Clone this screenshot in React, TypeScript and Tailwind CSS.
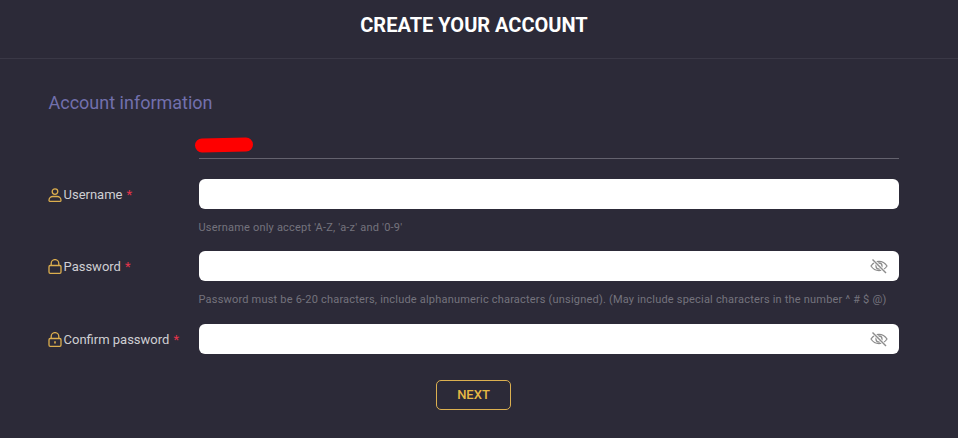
import type { ReactNode } from 'react';

function UserIcon() {
  return (
    <svg viewBox="0 0 14 14" className="h-[14px] w-[14px]" fill="none" stroke="currentColor" strokeWidth="1.3">
      <circle cx="7" cy="3.6" r="2.8" />
      <path d="M1 12.200c0-2.400 2-3.700 3.600-3.700h4.800c1.600 0 3.600 1.300 3.600 3.700 0 .8-.4 1.200-1.200 1.200H2.200c-.8 0-1.200-.4-1.200-1.200z" />
    </svg>
  );
}

function LockIcon({ keyhole }: { keyhole?: boolean }) {
  return (
    <svg viewBox="0 0 14 15" className="h-[15px] w-[14px]" fill="none" stroke="currentColor" strokeWidth="1.3">
      <path d="M3.200 6.500V4.400a3.800 3.800 0 0 1 7.600 0v2.100" />
      <rect x="1" y="6.500" width="12" height="7.800" rx="1.200" />
      {keyhole && <path d="M7 9.200v2.400" strokeWidth="1.600" />}
    </svg>
  );
}

function EyeIcon() {
  return (
    <svg
      viewBox="0 0 18 16"
      className="absolute right-[11px] top-[7px] h-[16px] w-[18px] text-[#8c8c8c]"
      fill="none"
      stroke="currentColor"
      strokeWidth="1.3"
    >
      <path d="M1 8c2-3 4.800-4.600 8-4.600S15 5 17 8c-2 3-4.800 4.600-8 4.600S3 11 1 8z" />
      <circle cx="9" cy="8" r="3" />
      <path d="M3.500 2.200l11.500 12" stroke="#fff" strokeWidth="3" />
      <path d="M2.500 1.500l13.500 13.500" strokeWidth="1.400" />
    </svg>
  );
}

function Field({
  icon,
  label,
  hint,
  hasEye,
  rowClass,
}: {
  icon: ReactNode;
  label: string;
  hint?: string;
  hasEye?: boolean;
  rowClass?: string;
}) {
  return (
    <div className={rowClass}>
      <div className="flex items-center">
        <div className="flex w-[150px] items-center pt-[1px] text-[13px] text-[#cfcfd3]">
          <span className="-ml-[1px] mr-[1.500px] text-[#dcae4e]">{icon}</span>
          {label}
          <span className="ml-[4px] text-[#e5344b]">*</span>
        </div>
        <div className="relative h-[30px] w-[700px] rounded-[6px] bg-white">{hasEye && <EyeIcon />}</div>
      </div>
      {hint && (
        <p className="ml-[149.500px] mt-[12px] h-[13px] text-[11px] leading-[14px] tracking-[0.2px] text-[#74737d]">{hint}</p>
      )}
    </div>
  );
}

export default function App() {
  return (
    <div className="h-[438px] w-[958px] overflow-hidden bg-[#2c2a38] font-['Roboto',sans-serif]">
      {/* Header */}
      <div className="flex h-[59px] items-start justify-center border-b border-[#3a3846] pr-[10px] pt-[13px]">
        <h1 className="text-[20px] font-bold leading-[24px] text-white">CREATE YOUR ACCOUNT</h1>
      </div>

      <div className="pl-[49px] pt-[33px]">
        <h2 className="-ml-[0.500px] text-[18px] leading-[22px] text-[#7270ad]">Account information</h2>

        <div className="relative ml-[150px] mt-[15px] h-[30px] w-[700px] border-b border-[#64626e]">
          <div className="absolute left-[-4px] top-[9px] h-[14px] w-[58px] -rotate-1 rounded-full bg-[#fe0000]" />
        </div>

        <Field rowClass="mt-[20px]" icon={<UserIcon />} label="Username" hint="Username only accept 'A-Z, 'a-z' and '0-9'" />
        <Field
          rowClass="mt-[17px]"
          icon={<LockIcon />}
          label="Password"
          hasEye
          hint="Password must be 6-20 characters, include alphanumeric characters (unsigned). (May include special characters in the number ^ # $ @)"
        />
        <Field rowClass="mt-[18px]" icon={<LockIcon keyhole />} label="Confirm password" hasEye />

        <div className="ml-[387px] mt-[26px]">
          <button className="h-[30px] w-[75px] rounded-[5px] border border-[#dcb050] text-[13px] font-medium text-[#e6b944]">
            NEXT
          </button>
        </div>
      </div>
    </div>
  );
}
